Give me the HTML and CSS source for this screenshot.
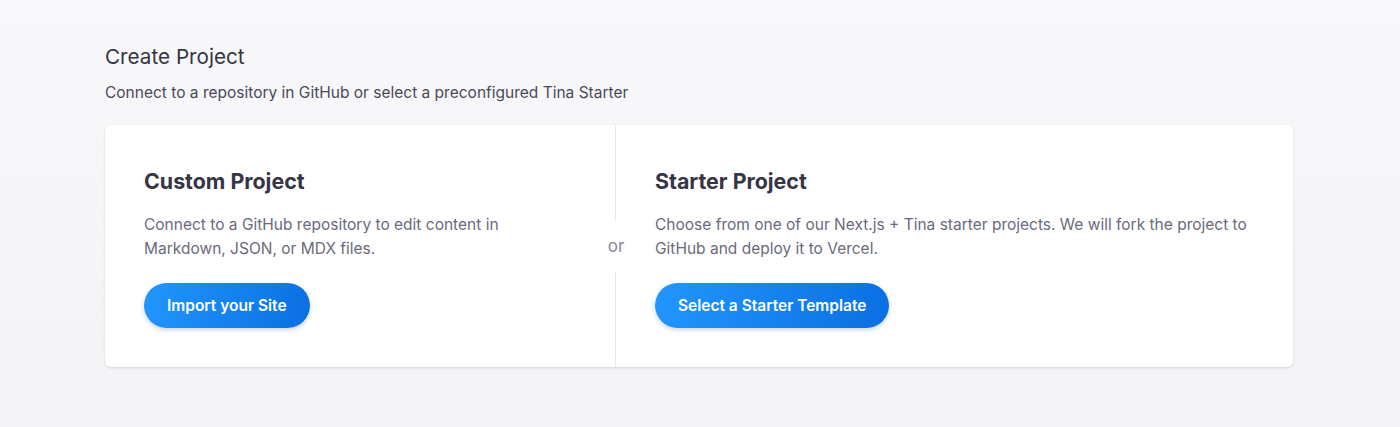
FILE: index.html
```html
<!DOCTYPE html>
<html lang="en">
<head>
<meta charset="utf-8">
<title>Create Project</title>
<link rel="stylesheet" href="styles.css">
</head>
<body>
<main class="page">
  <header class="page-header">
    <h1 class="page-title">Create Project</h1>
    <p class="page-subtitle">Connect to a repository in GitHub or select a preconfigured Tina Starter</p>
  </header>
  <section class="card">
    <div class="panel panel-custom">
      <h2 class="panel-title">Custom Project</h2>
      <p class="panel-text">Connect to a GitHub repository to edit content in Markdown, JSON, or MDX files.</p>
      <button class="btn" type="button">Import your Site</button>
    </div>
    <div class="panel panel-starter">
      <span class="or">or</span>
      <h2 class="panel-title">Starter Project</h2>
      <p class="panel-text">Choose from one of our Next.js + Tina starter projects. We will fork the project to GitHub and deploy it to Vercel.</p>
      <button class="btn" type="button">Select a Starter Template</button>
    </div>
  </section>
</main>
</body>
</html>
```

FILE: styles.css
```css
* { box-sizing: border-box; }

html, body {
  margin: 0;
  padding: 0;
}

body {
  font-family: Inter, "Noto Sans", "Liberation Sans", sans-serif;
  background: linear-gradient(180deg, #f8f8fa 0%, #f3f3f6 100%);
  min-height: 427px;
  color: #3b3a4a;
}

.page {
  width: 1188px;
  margin-left: calc(50% - 595px);
  padding-top: 43px;
}

.page-header {
  margin-bottom: 20px;
}

.page-title {
  margin: 0;
  font-size: 20.7px;
  font-weight: 400;
  line-height: 28px;
  color: #363545;
}

.page-subtitle {
  margin: 10px 0 0;
  font-size: 15.5px;
  line-height: 24px;
  color: #4a4959;
}

.card {
  display: flex;
  background: #ffffff;
  border-radius: 6px;
  box-shadow: 0 1px 3px rgba(30, 30, 50, 0.10), 0 1px 2px rgba(30, 30, 50, 0.06);
}

.panel {
  padding: 41px 39px 39px;
}

.panel-custom {
  width: 510px;
  flex: none;
}

.panel-starter {
  flex: 1;
  position: relative;
  border-left: 1px solid #e5e5ea;
}

.or {
  position: absolute;
  left: -14px;
  top: 95px;
  width: 28px;
  padding: 13px 0;
  background: #ffffff;
  text-align: center;
  font-size: 17px;
  line-height: 26px;
  color: #8a8999;
}

.panel-title {
  margin: 0;
  font-size: 21.4px;
  font-weight: 700;
  line-height: 30px;
  color: #363545;
}

.panel-text {
  margin: 17px 0 0;
  font-size: 15.5px;
  line-height: 24px;
  color: #6b6a7b;
}

.panel-custom .panel-text {
  max-width: 420px;
}

.btn {
  margin-top: 22px;
  height: 45px;
  padding: 0 23px;
  border: 0;
  border-radius: 9999px;
  background: linear-gradient(100deg, #2296fe 0%, #0a6fe2 100%);
  box-shadow: 0 2px 5px rgba(10, 60, 140, 0.22);
  color: #ffffff;
  font-family: inherit;
  font-size: 15.5px;
  font-weight: 600;
  cursor: pointer;
}
```
